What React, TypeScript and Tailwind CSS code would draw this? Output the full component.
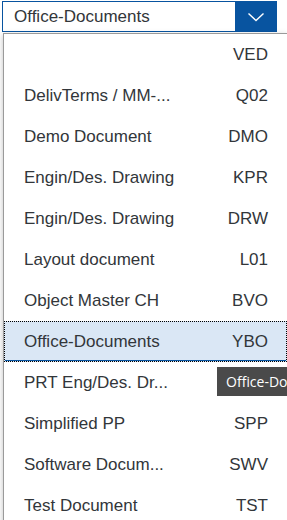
import React from "react";

const items: { text: string; code: string; selected?: boolean }[] = [
  { text: "", code: "VED" },
  { text: "DelivTerms / MM-...", code: "Q02" },
  { text: "Demo Document", code: "DMO" },
  { text: "Engin/Des. Drawing", code: "KPR" },
  { text: "Engin/Des. Drawing", code: "DRW" },
  { text: "Layout document", code: "L01" },
  { text: "Object Master CH", code: "BVO" },
  { text: "Office-Documents", code: "YBO", selected: true },
  { text: "PRT Eng/Des. Dr...", code: "" },
  { text: "Simplified PP", code: "SPP" },
  { text: "Software Docum...", code: "SWV" },
  { text: "Test Document", code: "TST" },
];

export default function App() {
  return (
    <div className="relative w-[287px] h-[520px] overflow-hidden bg-white font-['Liberation_Sans',Arial,sans-serif] text-[#32363a]">
      {/* combo input */}
      <div className="ml-[2px] mt-[1px] flex h-[31px] w-[275px] border border-[#0854a0] bg-white">
        <div className="flex flex-1 items-center pl-[11px] text-[17px]">Office-Documents</div>
        <div className="flex w-[41px] items-center justify-center bg-[#0854a0]">
          <svg width="18" height="10" viewBox="0 0 18 10" fill="none">
            <path d="M1.5 1.5 L9 8.5 L16.5 1.5" stroke="white" strokeWidth="1.4" />
          </svg>
        </div>
      </div>

      {/* popover list */}
      <div className="ml-[3px] mt-[1px] border-l border-t border-[#9a9a9a] bg-white shadow-[0_2px_6px_rgba(0,0,0,0.25)]">
        {items.map((it, i) => (
          <Row key={i} text={it.text} code={it.code} selected={it.selected} />
        ))}
      </div>

      {/* tooltip */}
      <div className="absolute left-[217px] top-[367px] flex h-[29px] w-[70px] items-center overflow-hidden bg-[#4a4a4a] pl-[9px] text-[14px] text-white font-['Open_Sans','DejaVu_Sans',sans-serif] whitespace-nowrap">
        Office-Do
      </div>
    </div>
  );
}

const Row = ({ text, code, selected }: { text: string; code: string; selected?: boolean }) => (
  <div
    className={
      selected
        ? "flex h-[41px] items-center justify-between border border-dotted border-black bg-[#dae7f5] pl-[19px] pr-[18px] text-[17px] shadow-[inset_0_-1px_0_#0854a0]"
        : "flex h-[41px] items-center justify-between pl-[20px] pr-[19px] text-[17px]"
    }
  >
    <span className="whitespace-nowrap">{text}</span>
    <span className="whitespace-nowrap">{code}</span>
  </div>
);
